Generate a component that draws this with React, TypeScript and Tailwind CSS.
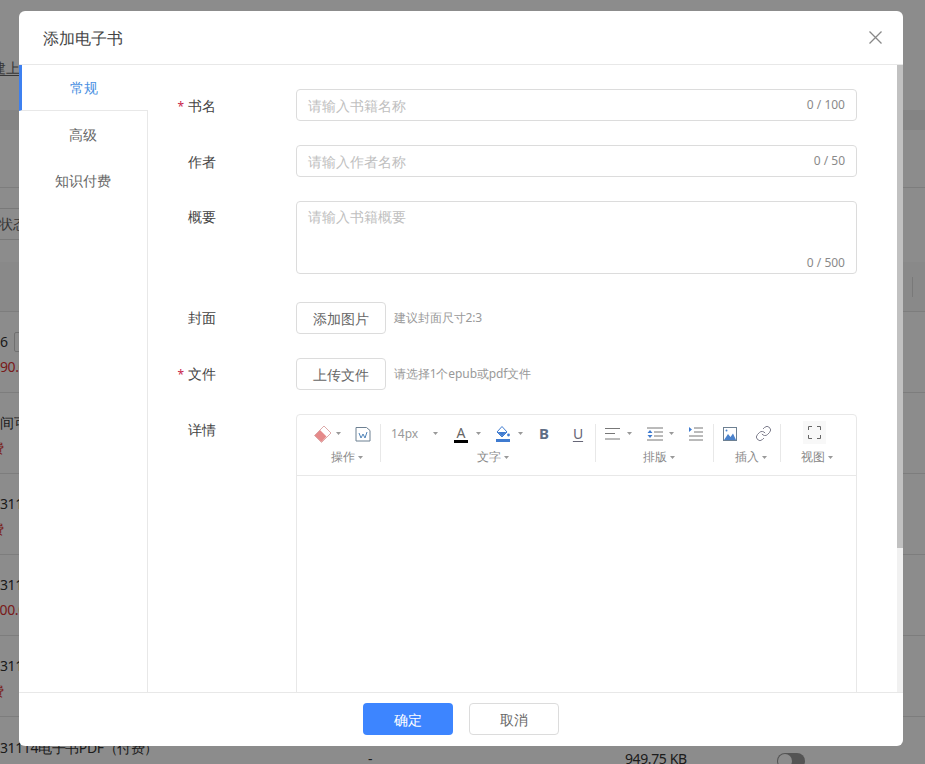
import { Link as LinkIcon } from 'lucide-react';

const FONT = 'font-["Noto_Sans","Noto_Sans_CJK_SC",sans-serif]';

function Caret({ className = '' }: { className?: string }) {
  return (
    <svg width="5" height="3" viewBox="0 0 5 3" className={`shrink-0 ${className}`}>
      <path d="M0 0h5L2.5 3z" fill="#999" />
    </svg>
  );
}

function Eraser() {
  return (
    <svg width="18" height="18" viewBox="0 0 18 18" className="shrink-0 ml-[17px]">
      <path d="M0.500 10.500 6 5 12.500 11.500 7.500 17z" fill="#e58a8a" />
      <path d="M0.500 10.500 10 1l7 7L7.500 17.500z" fill="none" stroke="#d9a0a0" strokeWidth="0.9" />
    </svg>
  );
}

function FileIcon() {
  return (
    <svg width="16" height="16" viewBox="0 0 16 16" className="shrink-0 ml-[14px]">
      <path d="M1 1.500h10.500l3.500 3V15H1z" fill="none" stroke="#6d8092" strokeWidth="1" />
      <path d="M4 7l2 5 2-4 2 4 2-6" fill="none" stroke="#4f83b8" strokeWidth="1" />
    </svg>
  );
}

function Bucket() {
  return (
    <span className="ml-[15px] flex w-[14px] flex-col items-center">
      <svg width="14" height="12" viewBox="0 0 14 12">
        <path d="M6 0.500 1 6l5 5 5-5z" fill="none" stroke="#3f7bd0" strokeWidth="1" />
        <path d="M1.500 6h9L6 10.500z" fill="#3f7bd0" />
        <circle cx="12.500" cy="9" r="1.400" fill="#3f7bd0" />
      </svg>
      <span className="mt-[1px] h-[3px] w-[14px] bg-[#3f7bd0]" />
    </span>
  );
}

function AlignIcon() {
  return (
    <svg width="15" height="13" viewBox="0 0 15 13" className="ml-[9px] shrink-0">
      <path d="M0 1.500h15M0 6.500h10M0 12h15" stroke="#777" strokeWidth="1" />
    </svg>
  );
}

function LineHeightIcon() {
  return (
    <svg width="16" height="14" viewBox="0 0 16 14" className="ml-[15px] shrink-0">
      <path d="M0 1h16M7 5h9M7 9h9M0 13h16" stroke="#777" strokeWidth="1" />
      <path d="M3 3 5.500 6h-5zM3 11 .5 8h5z" fill="#3f7bd0" />
    </svg>
  );
}

function IndentIcon() {
  return (
    <svg width="14" height="15" viewBox="0 0 14 15" className="ml-[15px] shrink-0">
      <path d="M5 2h9M5 6h9M0 10h14M0 14h14" stroke="#777" strokeWidth="1" />
      <path d="M0 1l3 2.500L0 6z" fill="#3f7bd0" />
    </svg>
  );
}

function ImageIcon() {
  return (
    <svg width="14" height="14" viewBox="0 0 14 14" className="ml-[9px] shrink-0">
      <rect x="0.500" y="0.500" width="13" height="13" fill="none" stroke="#6d8092" />
      <path d="M1 13 5 7l2.500 3L10 6.500l3 6.500z" fill="#4a82cc" />
      <circle cx="3.500" cy="3.500" r="1" fill="#4a82cc" />
    </svg>
  );
}

function FullscreenButton() {
  return (
    <span className="ml-[22px] mt-[-2px] flex h-[23px] w-[23px] items-center justify-center bg-[#f8f8f8]">
      <svg width="13" height="13" viewBox="0 0 13 13">
        <path d="M0.500 4V0.500H4M9 0.500h3.500V4M12.500 9v3.500H9M4 12.500H0.500V9" fill="none" stroke="#666" strokeWidth="1" />
      </svg>
    </span>
  );
}

function ToolGroup({ width, labelPad, label, divider = true, children }: { width: string; labelPad: string; label: string; divider?: boolean; children: React.ReactNode }) {
  return (
    <div className={`${width} h-[38px] shrink-0 ${divider ? 'border-r border-[#e8e8e8]' : ''}`}>
      <div className="flex h-[19px] items-center">{children}</div>
      <div className={`${labelPad} mt-[4px] flex h-[20px] items-center gap-[3px] text-[12px] leading-[20px] text-[#888]`}>
        {label}
        <Caret />
      </div>
    </div>
  );
}

function Toolbar() {
  return (
    <div className="flex h-[61px] border-b border-[#e8e8e8] pt-[9px]">
      <ToolGroup width="w-[84px]" labelPad="pl-[34px]" label="操作">
        <Eraser />
        <Caret className="ml-[4px]" />
        <FileIcon />
      </ToolGroup>
      <ToolGroup width="w-[215px]" labelPad="pl-[96px]" label="文字">
        <span className="ml-[10px] w-[25px] text-[12px] text-[#999]">14px</span>
        <Caret className="ml-[17px]" />
        <span className="ml-[16px] flex w-[14px] flex-col items-center">
          <span className="text-[14px] leading-[15px] text-[#666]">A</span>
          <span className="h-[3px] w-[14px] bg-black" />
        </span>
        <Caret className="ml-[8px]" />
        <Bucket />
        <Caret className="ml-[8px]" />
        <span className="ml-[15px] w-[12px] text-center text-[15px] font-bold text-[#5f6e85]">B</span>
        <span className="ml-[22px] w-[12px] text-center text-[14px] text-[#667] underline underline-offset-2">U</span>
      </ToolGroup>
      <ToolGroup width="w-[118px]" labelPad="pl-[47px]" label="排版">
        <AlignIcon />
        <Caret className="ml-[7px]" />
        <LineHeightIcon />
        <Caret className="ml-[6px]" />
        <IndentIcon />
      </ToolGroup>
      <ToolGroup width="w-[67px]" labelPad="pl-[21px]" label="插入">
        <ImageIcon />
        <LinkIcon size={17} strokeWidth={1.2} className="ml-[18px] shrink-0 text-[#667]" />
      </ToolGroup>
      <ToolGroup width="flex-1" labelPad="pl-[20px]" label="视图" divider={false}>
        <FullscreenButton />
      </ToolGroup>
    </div>
  );
}

function FormRow({ label, required, className = '', labelClass = '', children }: { label: string; required?: boolean; className?: string; labelClass?: string; children: React.ReactNode }) {
  return (
    <div className={`flex ${className}`}>
      <div className={`h-[32px] w-[148px] shrink-0 pr-[80px] text-right text-[14px] leading-[32px] text-[#444] ${labelClass}`}>
        {required && <span className="mr-[4px] text-[12px] text-[#c8254a]">*</span>}
        {label}
      </div>
      <div className="min-w-0 flex-1">{children}</div>
    </div>
  );
}

function TextField({ placeholder, count }: { placeholder: string; count: string }) {
  return (
    <div className="flex h-[32px] items-center justify-between rounded-[4px] border border-[#dcdcdc] px-[11px] text-[14px]">
      <span className="text-[#c0c0c0]">{placeholder}</span>
      <span className="text-[12px] text-[#8a8a8a]">{count}</span>
    </div>
  );
}

function UploadRow({ button, hint }: { button: string; hint: string }) {
  return (
    <div className="flex items-center">
      <button className="h-[32px] w-[90px] rounded-[4px] border border-[#dcdcdc] bg-white text-[14px] text-[#666]">{button}</button>
      <span className="ml-[8px] text-[12px] tracking-[-0.1px] text-[#999]">{hint}</span>
    </div>
  );
}

function Dialog() {
  return (
    <div className="absolute left-[19px] top-[11px] flex h-[735px] w-[884px] flex-col overflow-hidden rounded-[6px] bg-white">
      <div className="flex h-[54px] shrink-0 items-center justify-between border-b border-[#e8e8e8] pl-[24px] pr-[21px]">
        <span className="text-[16px] text-[#444]">添加电子书</span>
        <svg width="13" height="13" viewBox="0 0 13 13">
          <path d="M0.500 0.500l12 12M12.500 0.500l-12 12" stroke="#888" strokeWidth="1.300" />
        </svg>
      </div>

      <div className="flex min-h-0 flex-1">
        <div className="flex w-[129px] shrink-0 flex-col text-[14px]">
          <div className="flex h-[46px] shrink-0 items-center justify-center border-b border-l-[3px] border-b-[#e8e8e8] border-l-[#3d80f0] pr-[3px] text-[#4a90e2]">常规</div>
          <div className="flex-1 border-r border-[#e8e8e8] pt-[1px] text-center text-[#666]">
            <div className="h-[46px] leading-[46px]">高级</div>
            <div className="h-[46px] leading-[46px]">知识付费</div>
          </div>
        </div>

        <div className="min-w-0 flex-1 overflow-hidden pr-[40px] pt-[24px]">
          <FormRow label="书名" required labelClass="pt-[1px]">
            <TextField placeholder="请输入书籍名称" count="0 / 100" />
          </FormRow>
          <FormRow label="作者" className="mt-[24px]" labelClass="pt-[1px]">
            <TextField placeholder="请输入作者名称" count="0 / 50" />
          </FormRow>
          <FormRow label="概要" className="mt-[24px]">
            <div className="flex h-[73px] flex-col justify-between rounded-[4px] border border-[#dcdcdc] px-[11px] pb-[1px] pt-[4px] text-[14px]">
              <span className="text-[#c0c0c0]">请输入书籍概要</span>
              <span className="self-end text-[12px] text-[#8a8a8a]">0 / 500</span>
            </div>
          </FormRow>
          <FormRow label="封面" className="mt-[28px]">
            <UploadRow button="添加图片" hint="建议封面尺寸2:3" />
          </FormRow>
          <FormRow label="文件" required className="mt-[24px]">
            <UploadRow button="上传文件" hint="请选择1个epub或pdf文件" />
          </FormRow>
          <FormRow label="详情" className="mt-[24px]">
            <div className="h-[400px] rounded-[4px] border border-[#e8e8e8]">
              <Toolbar />
            </div>
          </FormRow>
        </div>

        <div className="w-[6px] shrink-0 bg-[#f1f1f1]">
          <div className="h-[483px] bg-[#c1c1c1]" />
        </div>
      </div>

      <div className="flex h-[54px] shrink-0 items-center justify-center gap-[16px] border-t border-[#e8e8e8] pb-[1px]">
        <button className="h-[32px] w-[90px] rounded-[4px] bg-[#3d85ff] text-[14px] font-medium text-white">确定</button>
        <button className="h-[32px] w-[90px] rounded-[4px] border border-[#dcdcdc] bg-white text-[14px] text-[#666]">取消</button>
      </div>
    </div>
  );
}

function TableRow({ title, sub, subOffset }: { title: React.ReactNode; sub: string; subOffset: string }) {
  return (
    <div className="h-[81px] border-b border-[#e4e4e4] pt-[20px] text-[14px] leading-[20px] tracking-[-0.4px]">
      <div className="whitespace-nowrap text-[#333]">{title}</div>
      <div className={`${subOffset} mt-[5px] whitespace-nowrap text-[#d33]`}>{sub}</div>
    </div>
  );
}

function BackPage() {
  return (
    <div className="h-[764px] overflow-hidden bg-white">
      <div className="-ml-[8px] flex h-[110px] items-start pt-[57px] text-[14px] text-[#666]">
        <span className="underline underline-offset-2">建上</span>
      </div>
      <div className="h-[20px] bg-[#f0f0f0]" />
      <div className="h-[58px] border-b border-[#e4e4e4]" />
      <div className="h-[74px] pt-[20px]">
        <div className="-ml-[12px] flex h-[32px] w-[60px] items-center rounded-[4px] border border-[#dcdcdc] pb-[2px] pl-[10px] text-[14px] text-[#666]">状态</div>
      </div>
      <div className="flex h-[50px] items-center justify-end border-b border-[#e4e4e4] bg-[#fafafa] pr-[12px]">
        <span className="h-[20px] border-r border-[#ddd]" />
      </div>
      <TableRow title={<span className="flex items-center">6<span className="ml-[6px] h-[20px] w-[20px] rounded-[2px] border border-[#ccc]" /></span>} sub="90.00" subOffset="ml-0" />
      <TableRow title="间可" sub="免费" subOffset="-ml-[24px]" />
      <TableRow title="3111" sub="免费" subOffset="-ml-[24px]" />
      <TableRow title="3111" sub="300.00" subOffset="-ml-[8px]" />
      <TableRow title="3111" sub="免费" subOffset="-ml-[24px]" />
      <div className="relative flex h-[60px] items-start text-[14px] tracking-[-0.4px] text-[#333]">
        <span className="w-[368px] shrink-0 whitespace-nowrap pt-[21px] leading-[20px]">31114电子书PDF（付费）</span>
        <span className="w-[257px] shrink-0 pt-[32px] leading-[20px]">-</span>
        <span className="w-[152px] shrink-0 pt-[32px] leading-[20px]">949.75 KB</span>
        <span className="mt-[36px] flex h-[16px] w-[28px] shrink-0 items-center rounded-full bg-[#999] pl-[1px]">
          <span className="h-[14px] w-[14px] rounded-full bg-white" />
        </span>
      </div>
    </div>
  );
}

export default function App() {
  return (
    <div className={`relative h-[764px] w-[925px] overflow-hidden ${FONT}`}>
      <BackPage />
      <div className="absolute inset-0 bg-black/45" />
      <Dialog />
    </div>
  );
}
